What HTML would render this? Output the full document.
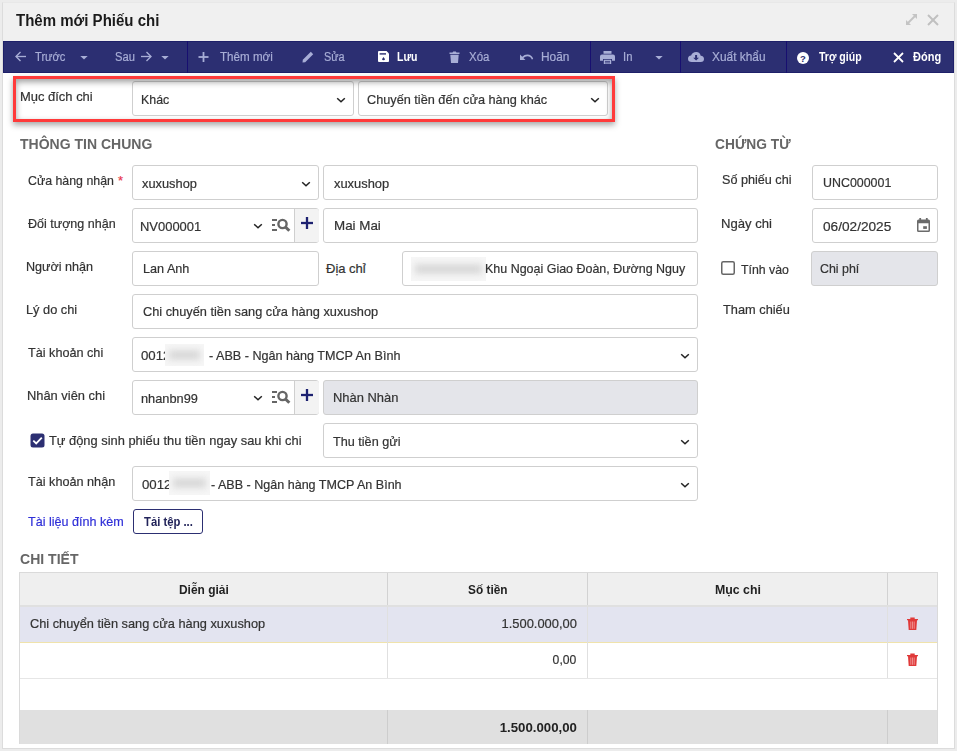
<!DOCTYPE html>
<html><head><meta charset="utf-8"><title>Thêm mới Phiếu chi</title>
<style>
html,body{margin:0;padding:0;}
body{width:957px;height:751px;overflow:hidden;position:relative;background:#ececec;font-family:"Liberation Sans", sans-serif;}
body>div{position:absolute;}
.t{position:absolute;white-space:nowrap;line-height:20px;}
.n{-webkit-text-stroke:0.2px currentColor;}
</style></head><body>
<div style="left:2px;top:2px;width:953px;height:747px;background:#f0f0f0;border:1px solid #dcdcdc;border-top-color:#e8e8e8;box-sizing:border-box"></div>
<div style="left:3px;top:73px;width:951px;height:675px;background:#fff"></div>
<div class="t" style="left:16.40px;top:11px;font-size:16px;color:#1b1b1b;font-weight:bold;transform:scaleX(0.9389);transform-origin:left top;">Thêm mới Phiếu chi</div>
<svg style="position:absolute;left:905px;top:13px;" width="13" height="13" viewBox="0 0 13 13"><g stroke="#c4c4c4" stroke-width="2" fill="none"><line x1="3" y1="10" x2="10" y2="3"/></g><path d="M7 1H12V6Z" fill="#c4c4c4"/><path d="M1 7V12H6Z" fill="#c4c4c4"/></svg>
<svg style="position:absolute;left:927px;top:14px;" width="12" height="12" viewBox="0 0 12 12"><g stroke="#c0c0c0" stroke-width="2"><line x1="1" y1="1" x2="11" y2="11"/><line x1="11" y1="1" x2="1" y2="11"/></g></svg>
<div style="left:3px;top:41px;width:951px;height:32px;background:#2c2f72;border:1px solid #1e2069;box-sizing:border-box"></div>
<div style="left:187px;top:41px;width:1px;height:32px;background:#170f70"></div>
<div style="left:590px;top:41px;width:1px;height:32px;background:#170f70"></div>
<div style="left:680px;top:41px;width:1px;height:32px;background:#170f70"></div>
<div style="left:786px;top:41px;width:1px;height:32px;background:#170f70"></div>
<svg style="position:absolute;left:14px;top:50px;" width="13" height="13" viewBox="0 0 13 13"><g stroke="#a8aed6" stroke-width="1.35" fill="none"><line x1="2" y1="6.5" x2="12" y2="6.5"/><polyline points="6.5,2 2,6.5 6.5,11"/></g></svg>
<div class="t n" style="left:35.00px;top:47px;font-size:12.5px;color:#a8aed6;font-weight:normal;transform:scaleX(0.8900);transform-origin:left top;">Trước</div>
<svg style="position:absolute;left:80px;top:55px;" width="8" height="5" viewBox="0 0 8 5"><path d="M0.3 1H7.7L4 4.6Z" fill="#a8aed6"/></svg>
<div class="t n" style="left:115.00px;top:47px;font-size:12.5px;color:#a8aed6;font-weight:normal;transform:scaleX(0.8944);transform-origin:left top;">Sau</div>
<svg style="position:absolute;left:140px;top:50px;" width="13" height="13" viewBox="0 0 13 13"><g stroke="#a8aed6" stroke-width="1.35" fill="none"><line x1="1" y1="6.5" x2="11" y2="6.5"/><polyline points="6.5,2 11,6.5 6.5,11"/></g></svg>
<svg style="position:absolute;left:161px;top:55px;" width="8" height="5" viewBox="0 0 8 5"><path d="M0.3 1H7.7L4 4.6Z" fill="#a8aed6"/></svg>
<svg style="position:absolute;left:198px;top:52px;" width="11" height="11" viewBox="0 0 11 11"><g stroke="#a8aed6" stroke-width="1.8"><line x1="5.5" y1="0" x2="5.5" y2="10"/><line x1="0.5" y1="5" x2="10.5" y2="5"/></g></svg>
<div class="t n" style="left:220.00px;top:47px;font-size:12.5px;color:#a8aed6;font-weight:normal;transform:scaleX(0.9294);transform-origin:left top;">Thêm mới</div>
<svg style="position:absolute;left:302px;top:51px;" width="13" height="12" viewBox="0 0 13 12"><path d="M0.5 11.5L0.8 8.8L8.8 0.8L11.2 3.2L3.2 11.2Z" fill="#a8aed6"/></svg>
<div class="t n" style="left:324.30px;top:47px;font-size:12.5px;color:#a8aed6;font-weight:normal;transform:scaleX(0.8745);transform-origin:left top;">Sửa</div>
<svg style="position:absolute;left:378px;top:51px;" width="11" height="11" viewBox="0 0 11 11"><path d="M1 0H8.5L11 2.5V10Q11 11 10 11H1Q0 11 0 10V1Q0 0 1 0Z" fill="#fff"/><rect x="1.6" y="2.2" width="6.4" height="1.4" fill="#2c2f72"/><path d="M5.5 6L6.9 7.9Q7.2 9.3 5.5 9.3Q3.8 9.3 4.1 7.9Z" fill="#2c2f72"/></svg>
<div class="t" style="left:397.00px;top:47px;font-size:12.5px;color:#fff;font-weight:bold;transform:scaleX(0.8385);transform-origin:left top;">Lưu</div>
<svg style="position:absolute;left:449px;top:51px;" width="11" height="12" viewBox="0 0 11 12"><path d="M0.5 1.5H3.5L4.2 0.5H6.8L7.5 1.5H10.5V3H0.5Z M1.3 3.8H9.7L9 12H2Z" fill="#a8aed6"/></svg>
<div class="t n" style="left:469.00px;top:47px;font-size:12.5px;color:#a8aed6;font-weight:normal;transform:scaleX(0.9169);transform-origin:left top;">Xóa</div>
<svg style="position:absolute;left:518px;top:51px;" width="16" height="10" viewBox="0 0 16 10"><path d="M2 3.5V9H7.5L5.4 6.9Q7 5.2 9.3 5.2Q12.6 5.2 13.8 8.5L15.2 8Q13.9 3.5 9.3 3.5Q6.5 3.5 4.2 5.7Z" fill="#a8aed6"/></svg>
<div class="t n" style="left:541.10px;top:47px;font-size:12.5px;color:#a8aed6;font-weight:normal;transform:scaleX(0.9501);transform-origin:left top;">Hoãn</div>
<svg style="position:absolute;left:600px;top:51px;" width="15" height="13" viewBox="0 0 15 13"><path d="M3.5 0H11.5V2.8H3.5Z M2 3.5H13Q15 3.5 15 5.5V9.8H12V8H3V9.8H0V5.5Q0 3.5 2 3.5Z M3.8 8.8H11.2V13H3.8Z" fill="#a8aed6"/><g stroke="#2c2f72" stroke-width="0.8"><line x1="5" y1="10.4" x2="10" y2="10.4"/><line x1="5" y1="11.9" x2="10" y2="11.9"/></g></svg>
<div class="t n" style="left:623.20px;top:47px;font-size:12.5px;color:#a8aed6;font-weight:normal;transform:scaleX(0.9006);transform-origin:left top;">In</div>
<svg style="position:absolute;left:655px;top:55px;" width="8" height="5" viewBox="0 0 8 5"><path d="M0.3 1H7.7L4 4.6Z" fill="#a8aed6"/></svg>
<svg style="position:absolute;left:688px;top:52px;" width="16" height="10" viewBox="0 0 16 10"><path d="M3.8 10Q0 10 0 6.8Q0 3.9 3.1 3.6Q4.3 0 8.3 0Q12 0 12.7 3.8Q16 4.1 16 7Q16 10 12.7 10Z" fill="#a8aed6"/><path d="M7.1 3H9.1V5.8H11L8.1 8.6L5.2 5.8H7.1Z" fill="#2c2f72"/></svg>
<div class="t n" style="left:712.00px;top:47px;font-size:12.5px;color:#a8aed6;font-weight:normal;transform:scaleX(0.9503);transform-origin:left top;">Xuất khẩu</div>
<svg style="position:absolute;left:797px;top:52px;" width="12" height="12" viewBox="0 0 12 12"><circle cx="6" cy="6" r="6" fill="#fff"/><text x="6" y="9.5" text-anchor="middle" font-family="Liberation Sans" font-weight="bold" font-size="9.5" fill="#2c2f72">?</text></svg>
<div class="t" style="left:819.00px;top:47px;font-size:12.5px;color:#fff;font-weight:bold;transform:scaleX(0.8425);transform-origin:left top;">Trợ giúp</div>
<svg style="position:absolute;left:893px;top:52px;" width="11" height="11" viewBox="0 0 11 11"><g stroke="#fff" stroke-width="1.8"><line x1="1" y1="1" x2="10" y2="10"/><line x1="10" y1="1" x2="1" y2="10"/></g></svg>
<div class="t" style="left:913.20px;top:47px;font-size:12.5px;color:#fff;font-weight:bold;transform:scaleX(0.8798);transform-origin:left top;">Đóng</div>
<div class="t n" style="left:19.60px;top:87px;font-size:13px;color:#333;font-weight:normal;transform:scaleX(0.9961);transform-origin:left top;">Mục đích chi</div>
<div style="left:132px;top:81px;width:222px;height:35px;background:#fff;border:1px solid #cfcfcf;border-radius:3px;box-sizing:border-box"></div>
<div class="t n" style="left:141.40px;top:90px;font-size:13px;color:#333;font-weight:normal;transform:scaleX(0.9514);transform-origin:left top;">Khác</div>
<svg style="position:absolute;left:336.4px;top:96.7px;" width="10" height="6" viewBox="0 0 10 6"><polyline points="1.2,1.2 5,4.8 8.8,1.2" fill="none" stroke="#222" stroke-width="1.5"/></svg>
<div style="left:358px;top:81px;width:250px;height:35px;background:#fff;border:1px solid #cfcfcf;border-radius:3px;box-sizing:border-box"></div>
<div class="t n" style="left:367.30px;top:90px;font-size:13px;color:#333;font-weight:normal;transform:scaleX(0.9775);transform-origin:left top;">Chuyến tiền đến cửa hàng khác</div>
<svg style="position:absolute;left:590.4px;top:96.7px;" width="10" height="6" viewBox="0 0 10 6"><polyline points="1.2,1.2 5,4.8 8.8,1.2" fill="none" stroke="#222" stroke-width="1.5"/></svg>
<div style="left:13px;top:76px;width:602px;height:46px;border:3px solid #ff3a3a;box-sizing:border-box;box-shadow:0 3px 6px rgba(0,0,0,.35), inset 0 3px 6px rgba(0,0,0,.38)"></div>
<div class="t" style="left:19.80px;top:134px;font-size:15px;color:#666;font-weight:bold;transform:scaleX(0.9338);transform-origin:left top;">THÔNG TIN CHUNG</div>
<div class="t" style="left:714.60px;top:134px;font-size:15px;color:#666;font-weight:bold;transform:scaleX(0.9176);transform-origin:left top;">CHỨNG TỪ</div>
<div class="t n" style="left:27.50px;top:171px;font-size:13px;color:#333;font-weight:normal;transform:scaleX(0.9503);transform-origin:left top;">Cửa hàng nhận</div>
<div class="t n" style="left:118.00px;top:171px;font-size:13px;color:#e8384f;font-weight:normal;transform-origin:left top;">*</div>
<div style="left:132px;top:165px;width:187px;height:35px;background:#fff;border:1px solid #cfcfcf;border-radius:3px;box-sizing:border-box"></div>
<div class="t n" style="left:141.60px;top:174px;font-size:13px;color:#333;font-weight:normal;transform:scaleX(0.9864);transform-origin:left top;">xuxushop</div>
<svg style="position:absolute;left:301.4px;top:180.7px;" width="10" height="6" viewBox="0 0 10 6"><polyline points="1.2,1.2 5,4.8 8.8,1.2" fill="none" stroke="#222" stroke-width="1.5"/></svg>
<div style="left:323px;top:165px;width:375px;height:35px;background:#fff;border:1px solid #cfcfcf;border-radius:3px;box-sizing:border-box"></div>
<div class="t n" style="left:334.40px;top:174px;font-size:13px;color:#333;font-weight:normal;transform:scaleX(0.9918);transform-origin:left top;">xuxushop</div>
<div class="t n" style="left:27.50px;top:214px;font-size:13px;color:#333;font-weight:normal;transform:scaleX(0.9631);transform-origin:left top;">Đối tượng nhận</div>
<div style="left:132px;top:208px;width:187px;height:35px;background:#fff;border:1px solid #cfcfcf;border-radius:3px;box-sizing:border-box"></div>
<div style="left:294px;top:209px;width:24px;height:33px;background:#f3f3f3;border-left:1px solid #cfcfcf;border-radius:0 2px 2px 0"></div>
<div class="t n" style="left:140.20px;top:217px;font-size:13px;color:#333;font-weight:normal;transform:scaleX(0.9959);transform-origin:left top;">NV000001</div>
<svg style="position:absolute;left:253.3px;top:223.3px;" width="10" height="6" viewBox="0 0 10 6"><polyline points="1.2,1.2 5,4.8 8.8,1.2" fill="none" stroke="#222" stroke-width="1.5"/></svg>
<svg style="position:absolute;left:271px;top:218px;" width="20" height="15" viewBox="0 0 20 15"><g fill="#666"><rect x="1" y="1" width="5" height="2"/><rect x="1" y="6" width="3" height="2"/><rect x="1" y="11" width="5" height="2"/></g><circle cx="11.5" cy="6" r="4.1" fill="none" stroke="#666" stroke-width="2.4"/><line x1="14.5" y1="9" x2="18.3" y2="12.8" stroke="#666" stroke-width="3"/></svg>
<svg style="position:absolute;left:301px;top:217px;" width="12" height="12" viewBox="0 0 12 12"><g stroke="#1d2170" stroke-width="2.3"><line x1="6" y1="0" x2="6" y2="12"/><line x1="0" y1="6" x2="12" y2="6"/></g></svg>
<div style="left:323px;top:208px;width:375px;height:35px;background:#fff;border:1px solid #cfcfcf;border-radius:3px;box-sizing:border-box"></div>
<div class="t n" style="left:333.80px;top:216px;font-size:13px;color:#333;font-weight:normal;transform:scaleX(1.0282);transform-origin:left top;">Mai Mai</div>
<div class="t n" style="left:26.00px;top:257px;font-size:13px;color:#333;font-weight:normal;transform:scaleX(0.9687);transform-origin:left top;">Người nhận</div>
<div style="left:132px;top:251px;width:187px;height:35px;background:#fff;border:1px solid #cfcfcf;border-radius:3px;box-sizing:border-box"></div>
<div class="t n" style="left:143.20px;top:259px;font-size:13px;color:#333;font-weight:normal;transform:scaleX(0.9724);transform-origin:left top;">Lan Anh</div>
<div class="t n" style="left:326.00px;top:259px;font-size:13px;color:#333;font-weight:normal;transform-origin:left top;">Địa chỉ</div>
<div style="left:402px;top:251px;width:296px;height:35px;background:#fff;border:1px solid #cfcfcf;border-radius:3px;box-sizing:border-box"></div>
<div style="left:411px;top:257px;width:75px;height:24px;background:#f6f6f6;overflow:hidden"><div style="position:absolute;left:4px;top:7.0px;width:67px;height:10px;background:#d9d9d9;filter:blur(3px)"></div></div>
<div class="t n" style="left:485.00px;top:259px;font-size:13px;color:#333;font-weight:normal;transform:scaleX(0.9591);transform-origin:left top;">Khu Ngoại Giao Đoàn, Đường Nguy</div>
<div class="t n" style="left:26.00px;top:300px;font-size:13px;color:#333;font-weight:normal;transform:scaleX(0.9837);transform-origin:left top;">Lý do chi</div>
<div style="left:132px;top:294px;width:566px;height:35px;background:#fff;border:1px solid #cfcfcf;border-radius:3px;box-sizing:border-box"></div>
<div class="t n" style="left:143.20px;top:302px;font-size:13px;color:#333;font-weight:normal;transform:scaleX(0.9827);transform-origin:left top;">Chi chuyến tiền sang cửa hàng xuxushop</div>
<div class="t n" style="left:27.50px;top:343px;font-size:13px;color:#333;font-weight:normal;transform:scaleX(0.9725);transform-origin:left top;">Tài khoản chi</div>
<div style="left:132px;top:337px;width:566px;height:35px;background:#fff;border:1px solid #cfcfcf;border-radius:3px;box-sizing:border-box"></div>
<div class="t n" style="left:141.30px;top:346px;font-size:13px;color:#333;font-weight:normal;transform:scaleX(1.0200);transform-origin:left top;">0012</div>
<div style="left:165px;top:344px;width:39px;height:22px;background:#f6f6f6;overflow:hidden"><div style="position:absolute;left:4px;top:6.0px;width:31px;height:10px;background:#d9d9d9;filter:blur(3px)"></div></div>
<div class="t n" style="left:209.40px;top:346px;font-size:13px;color:#333;font-weight:normal;transform:scaleX(0.9690);transform-origin:left top;">- ABB - Ngân hàng TMCP An Bình</div>
<svg style="position:absolute;left:680.4px;top:352.7px;" width="10" height="6" viewBox="0 0 10 6"><polyline points="1.2,1.2 5,4.8 8.8,1.2" fill="none" stroke="#222" stroke-width="1.5"/></svg>
<div class="t n" style="left:26.80px;top:386px;font-size:13px;color:#333;font-weight:normal;transform:scaleX(0.9901);transform-origin:left top;">Nhân viên chi</div>
<div style="left:132px;top:380px;width:187px;height:35px;background:#fff;border:1px solid #cfcfcf;border-radius:3px;box-sizing:border-box"></div>
<div style="left:294px;top:381px;width:24px;height:33px;background:#f3f3f3;border-left:1px solid #cfcfcf;border-radius:0 2px 2px 0"></div>
<div class="t n" style="left:141.30px;top:389px;font-size:13px;color:#333;font-weight:normal;transform:scaleX(0.9837);transform-origin:left top;">nhanbn99</div>
<svg style="position:absolute;left:253.3px;top:395.3px;" width="10" height="6" viewBox="0 0 10 6"><polyline points="1.2,1.2 5,4.8 8.8,1.2" fill="none" stroke="#222" stroke-width="1.5"/></svg>
<svg style="position:absolute;left:271px;top:390px;" width="20" height="15" viewBox="0 0 20 15"><g fill="#666"><rect x="1" y="1" width="5" height="2"/><rect x="1" y="6" width="3" height="2"/><rect x="1" y="11" width="5" height="2"/></g><circle cx="11.5" cy="6" r="4.1" fill="none" stroke="#666" stroke-width="2.4"/><line x1="14.5" y1="9" x2="18.3" y2="12.8" stroke="#666" stroke-width="3"/></svg>
<svg style="position:absolute;left:301px;top:389px;" width="12" height="12" viewBox="0 0 12 12"><g stroke="#1d2170" stroke-width="2.3"><line x1="6" y1="0" x2="6" y2="12"/><line x1="0" y1="6" x2="12" y2="6"/></g></svg>
<div style="left:323px;top:380px;width:375px;height:35px;background:#e4e5ea;border:1px solid #cfcfcf;border-radius:3px;box-sizing:border-box"></div>
<div class="t n" style="left:333.20px;top:388px;font-size:13px;color:#333;font-weight:normal;transform:scaleX(0.9942);transform-origin:left top;">Nhàn Nhàn</div>
<svg style="position:absolute;left:30px;top:433px;" width="15" height="15" viewBox="0 0 15 15"><rect x="0.5" y="0.5" width="14" height="14" rx="2.5" fill="#2c2f72"/><polyline points="3.3,7.6 6.2,10.4 11.8,4.6" fill="none" stroke="#fff" stroke-width="1.8"/></svg>
<div class="t n" style="left:49.30px;top:431px;font-size:13px;color:#333;font-weight:normal;transform:scaleX(0.9896);transform-origin:left top;">Tự động sinh phiếu thu tiền ngay sau khi chi</div>
<div style="left:323px;top:423px;width:375px;height:35px;background:#fff;border:1px solid #cfcfcf;border-radius:3px;box-sizing:border-box"></div>
<div class="t n" style="left:332.50px;top:432px;font-size:13px;color:#333;font-weight:normal;transform:scaleX(0.9725);transform-origin:left top;">Thu tiền gửi</div>
<svg style="position:absolute;left:680.4px;top:438.7px;" width="10" height="6" viewBox="0 0 10 6"><polyline points="1.2,1.2 5,4.8 8.8,1.2" fill="none" stroke="#222" stroke-width="1.5"/></svg>
<div class="t n" style="left:27.50px;top:472px;font-size:13px;color:#333;font-weight:normal;transform:scaleX(0.9729);transform-origin:left top;">Tài khoản nhận</div>
<div style="left:132px;top:466px;width:566px;height:35px;background:#fff;border:1px solid #cfcfcf;border-radius:3px;box-sizing:border-box"></div>
<div class="t n" style="left:142.20px;top:475px;font-size:13px;color:#333;font-weight:normal;transform:scaleX(1.0200);transform-origin:left top;">0012</div>
<div style="left:169px;top:471px;width:41px;height:24px;background:#f6f6f6;overflow:hidden"><div style="position:absolute;left:4px;top:7.0px;width:33px;height:10px;background:#d9d9d9;filter:blur(3px)"></div></div>
<div class="t n" style="left:210.70px;top:475px;font-size:13px;color:#333;font-weight:normal;transform:scaleX(0.9649);transform-origin:left top;">- ABB - Ngân hàng TMCP An Bình</div>
<svg style="position:absolute;left:680.4px;top:481.7px;" width="10" height="6" viewBox="0 0 10 6"><polyline points="1.2,1.2 5,4.8 8.8,1.2" fill="none" stroke="#222" stroke-width="1.5"/></svg>
<div class="t n" style="left:27.90px;top:512px;font-size:13px;color:#3030d8;font-weight:normal;transform:scaleX(0.9667);transform-origin:left top;">Tài liệu đính kèm</div>
<div style="left:133px;top:509px;width:70px;height:25px;border:1px solid #2c2f72;border-radius:3px;box-sizing:border-box;background:#fff"></div>
<div class="t" style="left:143.50px;top:512px;font-size:12.5px;color:#22245a;font-weight:bold;transform:scaleX(0.9006);transform-origin:left top;">Tải tệp ...</div>
<div class="t n" style="left:722.20px;top:170px;font-size:13px;color:#333;font-weight:normal;transform:scaleX(0.9712);transform-origin:left top;">Số phiếu chi</div>
<div style="left:812px;top:165px;width:126px;height:35px;background:#fff;border:1px solid #cfcfcf;border-radius:3px;box-sizing:border-box"></div>
<div class="t n" style="left:823.40px;top:173px;font-size:13px;color:#333;font-weight:normal;transform:scaleX(0.9546);transform-origin:left top;">UNC000001</div>
<div class="t n" style="left:721.20px;top:214px;font-size:13px;color:#333;font-weight:normal;transform:scaleX(1.0083);transform-origin:left top;">Ngày chi</div>
<div style="left:812px;top:208px;width:126px;height:35px;background:#fff;border:1px solid #cfcfcf;border-radius:3px;box-sizing:border-box"></div>
<div class="t n" style="left:823.40px;top:217px;font-size:13px;color:#333;font-weight:normal;transform:scaleX(1.0495);transform-origin:left top;">06/02/2025</div>
<svg style="position:absolute;left:917px;top:218px;" width="13" height="14" viewBox="0 0 13 14"><path d="M1.5 1.5H11.5Q13 1.5 13 3V12.5Q13 14 11.5 14H1.5Q0 14 0 12.5V3Q0 1.5 1.5 1.5Z M1.5 5.3V12.5H11.5V5.3Z" fill="#6b6b6b"/><rect x="2.3" y="0" width="1.8" height="2.5" fill="#6b6b6b"/><rect x="8.9" y="0" width="1.8" height="2.5" fill="#6b6b6b"/><rect x="6.2" y="8.2" width="3.7" height="2.7" fill="#6b6b6b"/></svg>
<svg style="position:absolute;left:721px;top:261px;" width="14" height="14" viewBox="0 0 14 14"><rect x="0.75" y="0.75" width="12.5" height="12.5" rx="1.5" fill="#fff" stroke="#666" stroke-width="1.5"/></svg>
<div class="t n" style="left:741.00px;top:260px;font-size:13px;color:#333;font-weight:normal;transform:scaleX(0.9468);transform-origin:left top;">Tính vào</div>
<div style="left:811px;top:251px;width:127px;height:35px;background:#e4e5ea;border:1px solid #cfcfcf;border-radius:3px;box-sizing:border-box"></div>
<div class="t n" style="left:820.40px;top:259px;font-size:13px;color:#333;font-weight:normal;transform:scaleX(0.9538);transform-origin:left top;">Chi phí</div>
<div class="t n" style="left:722.60px;top:300px;font-size:13px;color:#333;font-weight:normal;transform:scaleX(0.9835);transform-origin:left top;">Tham chiếu</div>
<div class="t" style="left:19.60px;top:549px;font-size:15px;color:#666;font-weight:bold;transform:scaleX(0.9360);transform-origin:left top;">CHI TIẾT</div>
<div style="left:19px;top:572px;width:919px;height:172px;border:1px solid #dadada;border-bottom:none;box-sizing:border-box;background:#fff"></div>
<div style="left:20px;top:573px;width:917px;height:32px;background:#efefef"></div>
<div style="left:20px;top:605px;width:917px;height:2px;background:#e0e0e0"></div>
<div style="left:20px;top:607px;width:917px;height:35px;background:#e3e4f0"></div>
<div style="left:20px;top:642px;width:917px;height:1px;background:#f0e3ab"></div>
<div style="left:20px;top:678px;width:917px;height:1px;background:#e6e6e6"></div>
<div style="left:20px;top:710px;width:917px;height:34px;background:#e0e0e0"></div>
<div style="left:387px;top:573px;width:1px;height:32px;background:#d2d2d2"></div>
<div style="left:387px;top:607px;width:1px;height:71px;background:#e0e0e0"></div>
<div style="left:387px;top:710px;width:1px;height:34px;background:#cdcdcd"></div>
<div style="left:587px;top:573px;width:1px;height:32px;background:#d2d2d2"></div>
<div style="left:587px;top:607px;width:1px;height:71px;background:#e0e0e0"></div>
<div style="left:587px;top:710px;width:1px;height:34px;background:#cdcdcd"></div>
<div style="left:887px;top:573px;width:1px;height:32px;background:#d2d2d2"></div>
<div style="left:887px;top:607px;width:1px;height:71px;background:#e0e0e0"></div>
<div style="left:887px;top:710px;width:1px;height:34px;background:#cdcdcd"></div>
<div class="t" style="left:179.00px;top:580px;font-size:12.5px;color:#222;font-weight:bold;transform:scaleX(0.9540);transform-origin:left top;">Diễn giải</div>
<div class="t" style="left:468.20px;top:580px;font-size:12.5px;color:#222;font-weight:bold;transform:scaleX(0.9479);transform-origin:left top;">Số tiền</div>
<div class="t" style="left:714.60px;top:580px;font-size:12.5px;color:#222;font-weight:bold;transform:scaleX(0.9861);transform-origin:left top;">Mục chi</div>
<div class="t n" style="left:30.30px;top:614px;font-size:13px;color:#333;font-weight:normal;transform:scaleX(0.9827);transform-origin:left top;">Chi chuyển tiền sang cửa hàng xuxushop</div>
<div class="t n" style="left:500.69px;top:614px;font-size:13px;color:#333;font-weight:normal;transform:scaleX(0.9933);transform-origin:right top;">1.500.000,00</div>
<div class="t n" style="left:551.29px;top:650px;font-size:13px;color:#333;font-weight:normal;transform:scaleX(0.9363);transform-origin:right top;">0,00</div>
<div class="t" style="left:500.69px;top:718px;font-size:13px;color:#222;font-weight:bold;transform:scaleX(1.0170);transform-origin:right top;">1.500.000,00</div>
<svg style="position:absolute;left:907px;top:617px;" width="11" height="13" viewBox="0 0 11 13"><path d="M0 2H11V3.3H0Z M3.3 0.6H7.7V2H3.3Z M1 3.3H10L9.3 13H1.7Z" fill="#e03a3a"/><g stroke="#f2a0a0" stroke-width="0.8"><line x1="3.8" y1="4.5" x2="3.8" y2="11.8"/><line x1="5.5" y1="4.5" x2="5.5" y2="11.8"/><line x1="7.2" y1="4.5" x2="7.2" y2="11.8"/></g></svg>
<svg style="position:absolute;left:907px;top:653px;" width="11" height="13" viewBox="0 0 11 13"><path d="M0 2H11V3.3H0Z M3.3 0.6H7.7V2H3.3Z M1 3.3H10L9.3 13H1.7Z" fill="#e03a3a"/><g stroke="#f2a0a0" stroke-width="0.8"><line x1="3.8" y1="4.5" x2="3.8" y2="11.8"/><line x1="5.5" y1="4.5" x2="5.5" y2="11.8"/><line x1="7.2" y1="4.5" x2="7.2" y2="11.8"/></g></svg>
</body></html>
